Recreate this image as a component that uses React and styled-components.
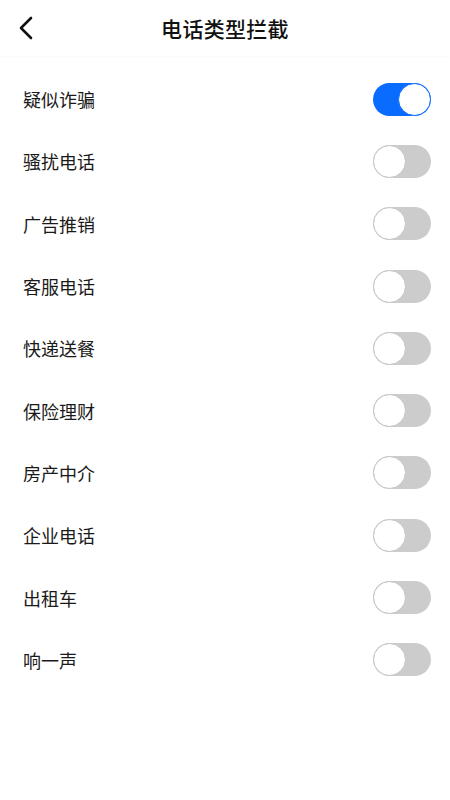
import React, { useState } from 'react';
import styled, { createGlobalStyle } from 'styled-components';

const GlobalStyle = createGlobalStyle`
  body {
    margin: 0;
    background: #ffffff;
    font-family: "Noto Sans CJK SC", "Noto Sans", sans-serif;
    color: #1a1a1a;
  }
`;

const Page = styled.div`
  width: 450px;
  min-height: 800px;
  background: #fff;
`;

const Header = styled.header`
  height: 56px;
  display: flex;
  align-items: center;
  justify-content: center;
  position: relative;
  box-shadow: 0 1px 2px rgba(0, 0, 0, 0.025);
`;

const BackButton = styled.button`
  position: absolute;
  left: 12px;
  top: 14px;
  width: 28px;
  height: 28px;
  padding: 0;
  border: none;
  background: none;
  display: flex;
  align-items: center;
  justify-content: center;
`;

const Title = styled.h1`
  margin: 0;
  font-size: 21px;
  font-weight: 500;
  color: #111;
  letter-spacing: 0.3px;
`;

const List = styled.ul`
  list-style: none;
  margin: 0;
  padding: 12px 0 0;
`;

const Row = styled.li`
  height: 62.3px;
  display: flex;
  align-items: center;
  justify-content: space-between;
  padding: 0 19px 0 23px;
`;

const Label = styled.span`
  font-size: 18px;
  color: #1a1a1a;
`;

const Track = styled.button`
  width: 58px;
  height: 33px;
  padding: 0;
  border: none;
  border-radius: 17px;
  background: ${(p) => (p.$on ? '#0a6cff' : '#cccccc')};
  position: relative;
  cursor: pointer;
`;

const Knob = styled.span`
  position: absolute;
  top: 0;
  left: ${(p) => (p.$on ? '25px' : '0')};
  width: 33px;
  height: 33px;
  box-sizing: border-box;
  border-radius: 50%;
  background: #fff;
  border: 1.5px solid ${(p) => (p.$on ? '#0a6cff' : '#c4c4c4')};
`;

const items = [
  '疑似诈骗',
  '骚扰电话',
  '广告推销',
  '客服电话',
  '快递送餐',
  '保险理财',
  '房产中介',
  '企业电话',
  '出租车',
  '响一声',
];

function Toggle({ on, onClick }) {
  return (
    <Track $on={on} onClick={onClick}>
      <Knob $on={on} />
    </Track>
  );
}

export default function App() {
  const [state, setState] = useState(items.map((_, i) => i === 0));

  const flip = (i) => {
    setState((s) => s.map((v, j) => (j === i ? !v : v)));
  };

  return (
    <Page>
      <GlobalStyle />
      <Header>
        <BackButton>
          <svg width="16" height="24" viewBox="0 0 16 24" fill="none">
            <path d="M13 2 L3 12 L13 22" stroke="#111" strokeWidth="2.6" strokeLinecap="round" strokeLinejoin="round" />
          </svg>
        </BackButton>
        <Title>电话类型拦截</Title>
      </Header>
      <List>
        {items.map((name, i) => (
          <Row key={name}>
            <Label>{name}</Label>
            <Toggle on={state[i]} onClick={() => flip(i)} />
          </Row>
        ))}
      </List>
    </Page>
  );
}
